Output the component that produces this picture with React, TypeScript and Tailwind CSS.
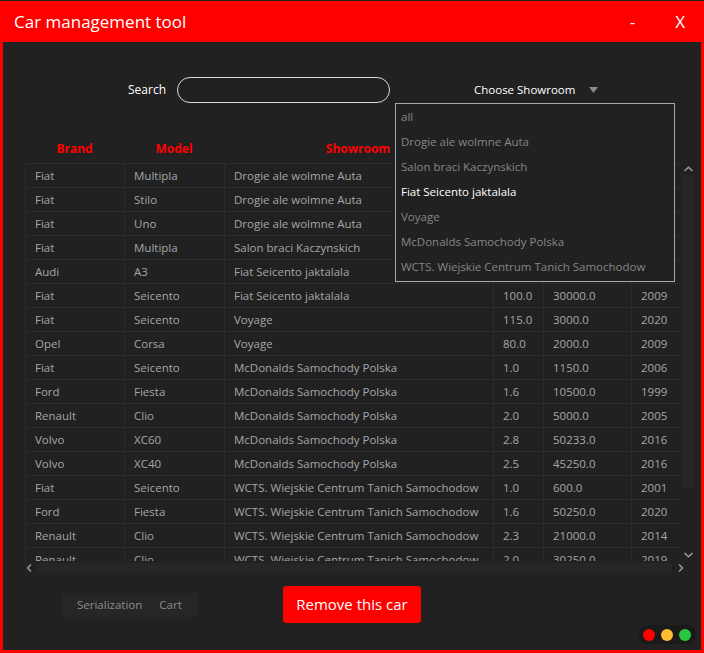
import React from "react";

type Car = {
  brand: string;
  model: string;
  showroom: string;
  engine: string;
  price: string;
  year: string;
};

const cars: Car[] = [
  { brand: "Fiat", model: "Multipla", showroom: "Drogie ale wolmne Auta", engine: "1.9", price: "12000.0", year: "2001" },
  { brand: "Fiat", model: "Stilo", showroom: "Drogie ale wolmne Auta", engine: "1.6", price: "8000.0", year: "2004" },
  { brand: "Fiat", model: "Uno", showroom: "Drogie ale wolmne Auta", engine: "1.0", price: "3000.0", year: "1998" },
  { brand: "Fiat", model: "Multipla", showroom: "Salon braci Kaczynskich", engine: "1.9", price: "9000.0", year: "2002" },
  { brand: "Audi", model: "A3", showroom: "Fiat Seicento jaktalala", engine: "2.0", price: "40000.0", year: "2012" },
  { brand: "Fiat", model: "Seicento", showroom: "Fiat Seicento jaktalala", engine: "100.0", price: "30000.0", year: "2009" },
  { brand: "Fiat", model: "Seicento", showroom: "Voyage", engine: "115.0", price: "3000.0", year: "2020" },
  { brand: "Opel", model: "Corsa", showroom: "Voyage", engine: "80.0", price: "2000.0", year: "2009" },
  { brand: "Fiat", model: "Seicento", showroom: "McDonalds Samochody Polska", engine: "1.0", price: "1150.0", year: "2006" },
  { brand: "Ford", model: "Fiesta", showroom: "McDonalds Samochody Polska", engine: "1.6", price: "10500.0", year: "1999" },
  { brand: "Renault", model: "Clio", showroom: "McDonalds Samochody Polska", engine: "2.0", price: "5000.0", year: "2005" },
  { brand: "Volvo", model: "XC60", showroom: "McDonalds Samochody Polska", engine: "2.8", price: "50233.0", year: "2016" },
  { brand: "Volvo", model: "XC40", showroom: "McDonalds Samochody Polska", engine: "2.5", price: "45250.0", year: "2016" },
  { brand: "Fiat", model: "Seicento", showroom: "WCTS. Wiejskie Centrum Tanich Samochodow", engine: "1.0", price: "600.0", year: "2001" },
  { brand: "Ford", model: "Fiesta", showroom: "WCTS. Wiejskie Centrum Tanich Samochodow", engine: "1.6", price: "50250.0", year: "2020" },
  { brand: "Renault", model: "Clio", showroom: "WCTS. Wiejskie Centrum Tanich Samochodow", engine: "2.3", price: "21000.0", year: "2014" },
  { brand: "Renault", model: "Clio", showroom: "WCTS. Wiejskie Centrum Tanich Samochodow", engine: "2.0", price: "30250.0", year: "2019" },
];

const showrooms = [
  "all",
  "Drogie ale wolmne Auta",
  "Salon braci Kaczynskich",
  "Fiat Seicento jaktalala",
  "Voyage",
  "McDonalds Samochody Polska",
  "WCTS. Wiejskie Centrum Tanich Samochodow",
];

const cell = "h-[24px] border border-[#2c2c2c] pl-[9px] pr-[10px] whitespace-nowrap overflow-hidden";

const App = () => {
  return (
    <div
      className="w-[704px] h-[653px] bg-[#ff0000] border-t border-[#1e1e1e] flex flex-col overflow-hidden"
      style={{ fontFamily: "'Open Sans', 'Noto Sans', sans-serif" }}
    >
      {/* title bar */}
      <div className="h-[41px] flex items-center text-white shrink-0">
        <div className="ml-[14px] text-[17px] leading-none">Car management tool</div>
        <div className="ml-auto mr-[40px] text-[16px]">-</div>
        <div className="mr-[19px] text-[17px]">X</div>
      </div>

      {/* content */}
      <div className="mx-[3px] mb-[3px] flex-1 bg-[#212121] relative flex flex-col">
        <div className="flex items-center pt-[35px] h-[60px] text-white text-[12px]">
          <span className="ml-[125px]">Search</span>
          <div className="ml-[11px] w-[213px] h-[26px] rounded-full border-[1.5px] border-[#d8d8d8]" />
          <span className="ml-[84px] text-[11.5px]">Choose Showroom</span>
          <svg className="ml-[14px]" width="9" height="6" viewBox="0 0 9 6">
            <path d="M0 0 L9 0 L4.5 6 Z" fill="#8a8a8a" />
          </svg>
        </div>

        {/* table */}
        <div className="mt-[32px] ml-[22px] flex">
          <div className="flex flex-col w-[655px]">
            <div className="flex h-[29px] items-center text-[#ff0000] font-bold text-[12px]">
              <div className="w-[99px] text-center">Brand</div>
              <div className="w-[100px] text-center">Model</div>
              <div className="w-[268px] text-center">Showroom</div>
              <div className="w-[50px] text-center">Engine</div>
              <div className="w-[88px] text-center">Price</div>
              <div className="w-[50px] text-center">Year</div>
            </div>
            <div className="h-[398px] overflow-hidden">
              <table className="table-fixed w-[655px] border-collapse text-[11.5px] text-[#a3a7ab]">
                <colgroup>
                  <col className="w-[99px]" />
                  <col className="w-[100px]" />
                  <col className="w-[269px]" />
                  <col className="w-[50px]" />
                  <col className="w-[88px]" />
                  <col className="w-[49px]" />
                </colgroup>
                <tbody>
                  {cars.map((c, i) => (
                    <tr key={i}>
                      <td className={cell}>{c.brand}</td>
                      <td className={cell}>{c.model}</td>
                      <td className={cell}>{c.showroom}</td>
                      <td className={cell}>{c.engine}</td>
                      <td className={cell}>{c.price}</td>
                      <td className={cell}>{c.year}</td>
                    </tr>
                  ))}
                </tbody>
              </table>
            </div>
            {/* horizontal scrollbar */}
            <div className="h-[13px] flex items-center">
              <svg className="ml-[1px]" width="6" height="8" viewBox="0 0 6 8">
                <path d="M5 0.5 L1.5 4 L5 7.5" stroke="#a0a0a0" strokeWidth="1.4" fill="none" />
              </svg>
              <div className="ml-[5px] flex-1 h-[10px] bg-[#262626]" />
              <svg className="ml-[6px] mr-[-4px]" width="6" height="8" viewBox="0 0 6 8">
                <path d="M1 0.5 L4.5 4 L1 7.5" stroke="#a0a0a0" strokeWidth="1.4" fill="none" />
              </svg>
            </div>
          </div>
          {/* vertical scrollbar */}
          <div className="mt-[29px] w-[16px] h-[398px] flex flex-col items-center">
            <svg className="mt-[3px]" width="9" height="6" viewBox="0 0 9 6">
              <path d="M0.5 5 L4.5 1.2 L8.5 5" stroke="#a0a0a0" strokeWidth="1.4" fill="none" />
            </svg>
            <div className="mt-[3px] w-[10px] h-[314px] bg-[#262626] ml-[-1px]" />
            <svg className="mt-auto mb-[3px]" width="9" height="6" viewBox="0 0 9 6">
              <path d="M0.5 1 L4.5 4.8 L8.5 1" stroke="#a0a0a0" strokeWidth="1.4" fill="none" />
            </svg>
          </div>
        </div>

        {/* bottom */}
        <div className="flex items-start mt-[12px]">
          <div className="ml-[58px] mt-[7px] w-[136px] h-[24px] bg-[#262626] flex items-center text-[11.5px] text-[#8c8c8c]">
            <span className="ml-[16px]">Serialization</span>
            <span className="ml-[17px]">Cart</span>
          </div>
          <button className="ml-[86px] w-[138px] h-[37px] bg-[#ff0000] rounded-[3px] text-white text-[15px]">
            Remove this car
          </button>
        </div>
        <div className="mt-auto mb-[6px] self-end mr-[5px] w-[58px] h-[19px] rounded-full bg-[#1a1a1a] flex items-center justify-center gap-[6px]">
          <div className="w-[12px] h-[12px] rounded-full bg-[#ff0000]" />
          <div className="w-[12px] h-[12px] rounded-full bg-[#febc2e]" />
          <div className="w-[12px] h-[12px] rounded-full bg-[#28c840]" />
        </div>

        {/* showroom dropdown */}
        <div className="absolute left-[392px] top-[61px] w-[280px] h-[179px] bg-[#212121] border border-[#a8a8a8] text-[11.5px] text-[#858585]">
          {showrooms.map((s) => (
            <div
              key={s}
              className={
                s === "Fiat Seicento jaktalala"
                  ? "h-[25px] flex items-center px-[5px] text-white"
                  : "h-[25px] flex items-center px-[5px]"
              }
            >
              {s}
            </div>
          ))}
        </div>
      </div>
    </div>
  );
};

export default App;
